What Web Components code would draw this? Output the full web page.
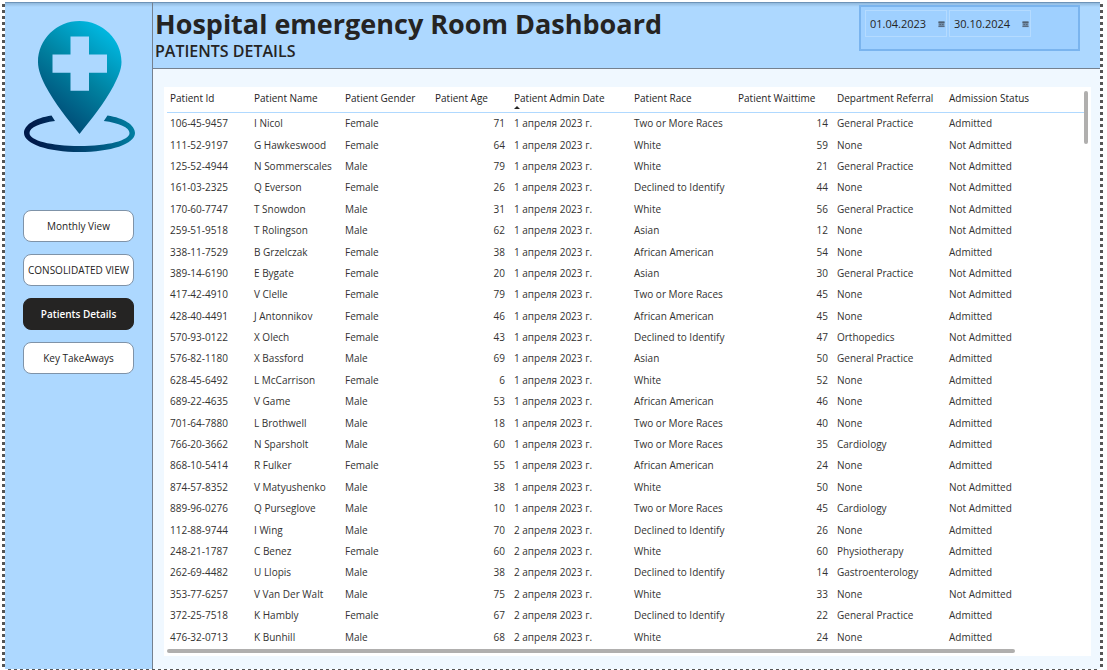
<!DOCTYPE html>
<html lang="en">
<head>
<meta charset="utf-8">
<title>Hospital emergency Room Dashboard</title>
<style>
  html, body { height: 100%; margin: 0; }
  body {
    font-family: "Open Sans", "Noto Sans", sans-serif;
    font-size: 10px;
    color: #252423;
    background: #fff;
    --panel: #add8ff;
    --canvas: #f0f8ff;
    --rule: #75818f;
  }
</style>
</head>
<body>
<report-page>
  <side-bar slot="side">
    <nav-button>Monthly View</nav-button>
    <nav-button>CONSOLIDATED VIEW</nav-button>
    <nav-button current>Patients Details</nav-button>
    <nav-button>Key TakeAways</nav-button>
  </side-bar>
  <page-header slot="header">
    <span slot="title">Hospital emergency Room Dashboard</span>
    <span slot="subtitle">PATIENTS DETAILS</span>
    <date-range slot="filter">
      <date-field label="Start date" value="01.04.2023"></date-field>
      <date-field label="End date" value="30.10.2024"></date-field>
    </date-range>
  </page-header>
  <scroll-card><patient-table></patient-table></scroll-card>
</report-page>

<script>
const define = (name, html, setup) => {
  const template = document.createElement('template');
  template.innerHTML = html;
  customElements.define(name, class extends HTMLElement {
    constructor() {
      super();
      this.attachShadow({ mode: 'open' }).append(template.content.cloneNode(true));
    }
    connectedCallback() { if (setup) setup(this, this.shadowRoot); }
  });
};

/* Report canvas with its dashed selection frame */
define('report-page', `
  <style>
    :host {
      --dash: #555;
      display: grid; box-sizing: border-box; height: 100vh;
      grid-template-columns: 148px minmax(0, 1fr);
      grid-template-rows: 67px minmax(0, 1fr);
      padding: 2px 7px 1px 5px;
      background:
        repeating-linear-gradient(to bottom, #fff 0 2px, var(--dash) 2px 5px, #fff 5px 6px) 2px 2px / 3px 100% no-repeat,
        repeating-linear-gradient(to bottom, #fff 0 2px, var(--dash) 2px 5px, #fff 5px 6px) right 4px top 2px / 3px 100% no-repeat,
        repeating-linear-gradient(to right, #fff 0 3px, var(--dash) 3px 6px) 5px 100% / calc(100% - 12px) 1px no-repeat,
        #fff;
    }
    .side { grid-row: 1 / 3; display: grid; }
    .head { display: grid; }
    main { display: grid; padding: 18px 9px 13px 11px; background: var(--canvas); min-height: 0; }
  </style>
  <div class="side"><slot name="side"></slot></div>
  <div class="head"><slot name="header"></slot></div>
  <main><slot></slot></main>
`);

define('side-bar', `
  <style>
    :host {
      display: flex; flex-direction: column; align-items: center; box-sizing: border-box; min-width: 0;
      background: linear-gradient(#8fb8dc, transparent 4px) var(--panel);
      border-top: 1px solid #6d93b8; border-right: 1px solid var(--rule);
      padding: 16px 18px;
    }
    nav { display: flex; flex-direction: column; gap: 12px; width: 100%; margin-top: 57px; }
  </style>
  <map-logo></map-logo>
  <nav aria-label="Report pages"><slot></slot></nav>
`);

define('map-logo', `
  <style>
    :host { display: block; }
    svg { display: block; }
  </style>
  <svg width="111" height="134" viewBox="23 19 111 134" role="img" aria-label="Hospital location" overflow="visible">
    <defs>
      <linearGradient id="g" gradientUnits="userSpaceOnUse" x1="50" y1="120" x2="116" y2="36">
        <stop offset="0" stop-color="#004672"/>
        <stop offset=".5" stop-color="#00809f"/>
        <stop offset="1" stop-color="#00b9e2"/>
      </linearGradient>
      <linearGradient id="r" gradientUnits="userSpaceOnUse" x1="35" y1="140" x2="135" y2="125">
        <stop offset="0" stop-color="#001a4b"/>
        <stop offset=".5" stop-color="#004a75"/>
        <stop offset="1" stop-color="#0080a2"/>
      </linearGradient>
    </defs>
    <path fill="url(#g)" fill-rule="evenodd" d="M79.500 21C56.500 21 38 39.500 38 62C38 70 41.500 78 45.500 86C54.500 103 67.500 119 79.500 134C91.500 119 104.500 103 113.500 86C117.500 78 121.500 70 121.500 62C121.500 39.500 102.500 21 79.500 21ZM70.500 36.500H89V54.500H107V72.800H89V90.800H70.500V72.800H52.500V54.500H70.500Z"/>
    <path fill="url(#r)" d="M51.500 115.500C35 118 24 125 24 133C24 144 48 152 79.500 152C111 152 135 144 135 133C135 125 124 118 107.500 115.500L103.800 121C119 123 129.500 127.500 129.500 133C129.500 140.500 108 146 79.500 146C51 146 29.500 140.500 29.500 133C29.500 127.500 40 123 55 121Z"/>
  </svg>
`);

define('nav-button', `
  <style>
    :host { display: block; }
    button {
      display: block; box-sizing: border-box; width: 100%; height: 32px; padding: 0;
      font: 10px/16px "Open Sans", "Noto Sans", sans-serif; color: #252423; white-space: nowrap;
      background: #fff; border: 1px solid #7f93a8; border-radius: 8px;
    }
    :host([current]) button { background: #252423; border-color: #252423; color: #fff; font-weight: 600; }
  </style>
  <button type="button"><slot></slot></button>
`, (host, root) => {
  if (host.hasAttribute('current')) root.querySelector('button').setAttribute('aria-current', 'page');
});

define('page-header', `
  <style>
    :host {
      display: flex; justify-content: space-between; align-items: flex-start; box-sizing: border-box;
      background: linear-gradient(#8fb8dc, transparent 4px) var(--panel);
      border-top: 1px solid #6d93b8; border-bottom: 1px solid var(--rule);
      padding: 2px 20px 0 2px;
    }
    h1, h2 { margin: 0; white-space: nowrap; }
    h1 { font-size: 27px; line-height: 38px; font-weight: 670; }
    h2 { font-size: 16px; line-height: 16px; font-weight: 600; }
  </style>
  <div>
    <h1><slot name="title"></slot></h1>
    <h2><slot name="subtitle"></slot></h2>
  </div>
  <slot name="filter"></slot>
`);

define('date-range', `
  <style>
    :host {
      display: flex; gap: 2px; box-sizing: border-box; width: 221px; height: 46px;
      padding: 3px 4px; background: #9fd0ff; border: 2px solid #7ab4ee; align-items: flex-start;
    }
  </style>
  <slot></slot>
`);

define('date-field', `
  <style>
    :host {
      display: flex; align-items: center; box-sizing: border-box; width: 82px; height: 27px;
      border: 1px solid #b5dbff;
    }
    input {
      flex: 1; min-width: 0; padding: 0 0 0 4px; border: 0; background: none; outline: 0;
      font: 11px/16px "Open Sans", "Noto Sans", sans-serif; color: #252423;
    }
    button { display: block; padding: 2px 1px 0 0; border: 0; background: none; }
    svg { display: block; }
  </style>
  <input type="text">
  <button type="button">
    <svg width="7" height="7" viewBox="0 0 7 7" aria-hidden="true">
      <path fill="#6f8aa5" d="M.500 .500H6.500V6H.500Z"/>
      <path fill="#4f6072" d="M.500 .500H6.500V2H.500Z"/>
      <path stroke="#4f6072" stroke-width=".8" fill="none" d="M.500 5.600H6.500M1.500 3.500H3M4 3.500H5.500"/>
    </svg>
  </button>
`, (host, root) => {
  const input = root.querySelector('input');
  input.value = host.getAttribute('value');
  input.setAttribute('aria-label', host.getAttribute('label'));
  root.querySelector('button').setAttribute('aria-label', host.getAttribute('label') + ' calendar');
});

/* White card with a vertical and a horizontal scroll thumb */
define('scroll-card', `
  <style>
    :host {
      display: grid; box-sizing: border-box; background: #fff; min-height: 0;
      grid-template-columns: minmax(0, 1fr) 4px; grid-template-rows: minmax(0, 1fr) 4px;
      row-gap: 1px; padding: 0 3px 3px;
    }
    .thumb { background: #b0afae; border-radius: 2px; }
    .v { height: 53px; margin-top: 4px; }
    .h { margin-right: 69px; }
  </style>
  <slot></slot>
  <div class="thumb v"></div>
  <div class="thumb h"></div>
`);

const columns = [
  ['Patient Id', 84], ['Patient Name', 91], ['Patient Gender', 90], ['Patient Age', 79, 'num'],
  ['Patient Admin Date', 120, 'sorted'], ['Patient Race', 104], ['Patient Waittime', 99, 'num'],
  ['Department Referral', 112], ['Admission Status', 0]
];
const D1 = '1 апреля 2023 г.', D2 = '2 апреля 2023 г.';
const F = 'Female', M = 'Male', W = 'White', A = 'Asian', AA = 'African American',
  TM = 'Two or More Races', DI = 'Declined to Identify', GP = 'General Practice', N = 'None',
  Y = 'Admitted', X = 'Not Admitted';
const rows = [
  ['106-45-9457', 'I Nicol', F, 71, D1, TM, 14, GP, Y],
  ['111-52-9197', 'G Hawkeswood', F, 64, D1, W, 59, N, X],
  ['125-52-4944', 'N Sommerscales', M, 79, D1, W, 21, GP, X],
  ['161-03-2325', 'Q Everson', F, 26, D1, DI, 44, N, X],
  ['170-60-7747', 'T Snowdon', M, 31, D1, W, 56, GP, X],
  ['259-51-9518', 'T Rolingson', M, 62, D1, A, 12, N, X],
  ['338-11-7529', 'B Grzelczak', F, 38, D1, AA, 54, N, Y],
  ['389-14-6190', 'E Bygate', F, 20, D1, A, 30, GP, X],
  ['417-42-4910', 'V Clelle', F, 79, D1, TM, 45, N, X],
  ['428-40-4491', 'J Antonnikov', F, 46, D1, AA, 45, N, Y],
  ['570-93-0122', 'X Olech', F, 43, D1, DI, 47, 'Orthopedics', X],
  ['576-82-1180', 'X Bassford', M, 69, D1, A, 50, GP, Y],
  ['628-45-6492', 'L McCarrison', F, 6, D1, W, 52, N, Y],
  ['689-22-4635', 'V Game', M, 53, D1, AA, 46, N, Y],
  ['701-64-7880', 'L Brothwell', M, 18, D1, TM, 40, N, Y],
  ['766-20-3662', 'N Sparsholt', M, 60, D1, TM, 35, 'Cardiology', Y],
  ['868-10-5414', 'R Fulker', F, 55, D1, AA, 24, N, Y],
  ['874-57-8352', 'V Matyushenko', M, 38, D1, W, 50, N, X],
  ['889-96-0276', 'Q Purseglove', M, 10, D1, TM, 45, 'Cardiology', X],
  ['112-88-9744', 'I Wing', M, 70, D2, DI, 26, N, Y],
  ['248-21-1787', 'C Benez', F, 60, D2, W, 60, 'Physiotherapy', Y],
  ['262-69-4482', 'U Llopis', M, 38, D2, DI, 14, 'Gastroenterology', Y],
  ['353-77-6257', 'V Van Der Walt', M, 75, D2, W, 33, N, X],
  ['372-25-7518', 'K Hambly', F, 67, D2, DI, 22, GP, Y],
  ['476-32-0713', 'K Bunhill', M, 68, D2, W, 24, N, Y]
];

define('patient-table', `
  <style>
    :host { display: block; min-height: 0; }
    table { width: 100%; height: 100%; table-layout: fixed; border-collapse: separate; border-spacing: 0; }
    th, td { padding: 0 6px 0 3px; text-align: left; white-space: nowrap; font-weight: 400; line-height: 14px; }
    th { position: relative; height: 22px; padding-bottom: 3px; border-bottom: 1px solid #b0d9ff; }
    td { color: #333231; padding-bottom: 1px; }
    td.num { text-align: right; }
    th.sorted::after {
      content: ""; position: absolute; left: 3px; bottom: 3px;
      border: solid transparent; border-width: 0 3px 3px; border-bottom-color: #252423;
    }
  </style>
  <table>
    <colgroup></colgroup>
    <thead><tr></tr></thead>
    <tbody></tbody>
  </table>
`, (host, root) => {
  const group = root.querySelector('colgroup'), head = root.querySelector('thead tr'), body = root.querySelector('tbody');
  for (const [label, width, kind] of columns) {
    const col = document.createElement('col');
    if (width) col.style.width = width + 'px';
    group.append(col);
    const th = document.createElement('th');
    th.scope = 'col';
    th.textContent = label;
    if (kind) th.className = kind;
    if (kind === 'sorted') th.setAttribute('aria-sort', 'ascending');
    head.append(th);
  }
  for (const row of rows) {
    const tr = body.insertRow();
    row.forEach((value, i) => {
      const td = tr.insertCell();
      td.textContent = value;
      if (columns[i][2] === 'num') td.className = 'num';
    });
  }
});
</script>
</body>
</html>
